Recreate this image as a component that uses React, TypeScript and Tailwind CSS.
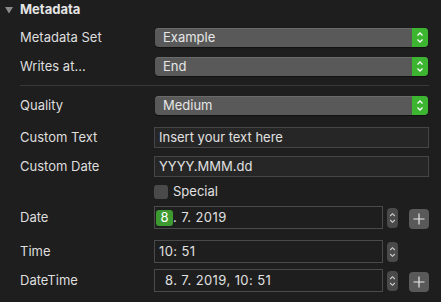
import React from "react";

const font = { fontFamily: "Inter, 'Noto Sans', sans-serif" };

function Popup({ value }: { value: string }) {
  return (
    <div className="flex h-[19px] w-[273px] rounded-[4px] bg-[#595959] shadow-[inset_0_1px_0_#6a6a6a,0_1px_1px_#111]">
      <div className="flex flex-1 items-center pl-[8px] text-[13px] text-[#e6e6e6]">{value}</div>
      <div className="flex w-[16px] flex-col items-center justify-center rounded-r-[4px] bg-[#3cb530]">
        <svg width="8" height="13" viewBox="0 0 8 13" fill="none" stroke="#fff" strokeWidth="1.3">
          <path d="M1.5 4.5 L4 2 L6.5 4.5" />
          <path d="M1.5 8.5 L4 11 L6.5 8.5" />
        </svg>
      </div>
    </div>
  );
}

function Stepper() {
  return (
    <div className="flex h-[20px] w-[11px] items-center justify-center rounded-[4px] bg-[#4a4a4a]">
      <svg width="7" height="14" viewBox="0 0 7 14" fill="none" stroke="#cfcfcf" strokeWidth="1.1">
        <path d="M1.2 5 L3.5 2.7 L5.8 5" />
        <path d="M1.2 9 L3.5 11.3 L5.8 9" />
      </svg>
    </div>
  );
}

function Plus() {
  return (
    <div className="flex h-[20px] w-[20px] items-center justify-center rounded-[4px] bg-[#595959]">
      <svg width="12" height="12" viewBox="0 0 12 12" stroke="#e8e8e8" strokeWidth="1.2">
        <path d="M6 0.5 V11.5 M0.5 6 H11.5" />
      </svg>
    </div>
  );
}

function Label({ children }: { children: React.ReactNode }) {
  return <div className="w-[134px] shrink-0 text-[13px] text-[#dedede]">{children}</div>;
}

export default function App() {
  return (
    <div className="h-[302px] w-[441px] overflow-hidden bg-[#1e1e1e] pl-[20px]" style={font}>
      <div className="relative flex h-[20px] items-center">
        <svg className="absolute left-[-15px] top-[7px]" width="8" height="7" viewBox="0 0 8 7">
          <path d="M0 0 H8 L4 6.5 Z" fill="#8a8a8a" />
        </svg>
        <span className="text-[13px] font-bold text-[#e4e4e4]">Metadata</span>
      </div>

      <div className="mt-[8px] flex h-[19px] items-center">
        <Label>Metadata Set</Label>
        <div className="ml-[1px]"><Popup value="Example" /></div>
      </div>
      <div className="mt-[10px] flex h-[19px] items-center">
        <Label>Writes at...</Label>
        <div className="ml-[1px]"><Popup value="End" /></div>
      </div>

      <div className="mt-[9px] h-px w-[409px] bg-[#383838]" />

      <div className="mt-[10px] flex h-[19px] items-center">
        <Label>Quality</Label>
        <div className="ml-[1px]"><Popup value="Medium" /></div>
      </div>

      <div className="mt-[12px] flex h-[21px] items-center">
        <Label>Custom Text</Label>
        <div className="flex h-[21px] w-[275px] items-center border border-[#464646] bg-[#262626] pl-[4px] text-[13px] text-[#e0e0e0]">
          Insert your text here
        </div>
      </div>
      <div className="mt-[8px] flex h-[21px] items-center">
        <Label>Custom Date</Label>
        <div className="flex h-[21px] w-[275px] items-center border border-[#464646] bg-[#262626] pl-[4px] text-[13px] text-[#e0e0e0]">
          YYYY.MMM.dd
        </div>
      </div>

      <div className="mt-[7px] flex h-[15px] items-center">
        <div className="w-[134px] shrink-0" />
        <div className="h-[14px] w-[14px] rounded-[3px] bg-[#4a4a4a]" />
        <span className="ml-[5px] text-[13px] text-[#e0e0e0]">Special</span>
      </div>

      <div className="mt-[7px] flex h-[23px] items-center">
        <Label>Date</Label>
        <div className="flex h-[23px] w-[229px] items-center border border-[#4a4a4a] bg-[#1e1e1e] pl-[1px] text-[13px] tracking-[0.4px] text-[#e0e0e0]">
          <span className="flex h-[16px] w-[17px] items-center justify-end rounded-[3px] bg-[#3c9a30] pr-[4px] text-white">8</span>
          <span className="whitespace-pre">. 7. 2019</span>
        </div>
        <div className="ml-[4px]"><Stepper /></div>
        <div className="ml-[11px] mt-[3px]"><Plus /></div>
      </div>

      <div className="mt-[11px] flex h-[23px] items-center">
        <Label>Time</Label>
        <div className="flex h-[23px] w-[229px] items-center border border-[#4a4a4a] bg-[#1e1e1e] pl-[4px] text-[13px] tracking-[0.4px] text-[#e0e0e0]">
          10: 51
        </div>
        <div className="ml-[4px]"><Stepper /></div>
      </div>

      <div className="mt-[6px] flex h-[23px] items-center">
        <Label>DateTime</Label>
        <div className="flex h-[23px] w-[229px] items-center whitespace-pre border border-[#4a4a4a] bg-[#1e1e1e] pl-[10px] text-[13px] tracking-[0.4px] text-[#e0e0e0]">
          {"8. 7. 2019, 10: 51"}
        </div>
        <div className="ml-[4px]"><Stepper /></div>
        <div className="ml-[11px] mt-[3px]"><Plus /></div>
      </div>
    </div>
  );
}
